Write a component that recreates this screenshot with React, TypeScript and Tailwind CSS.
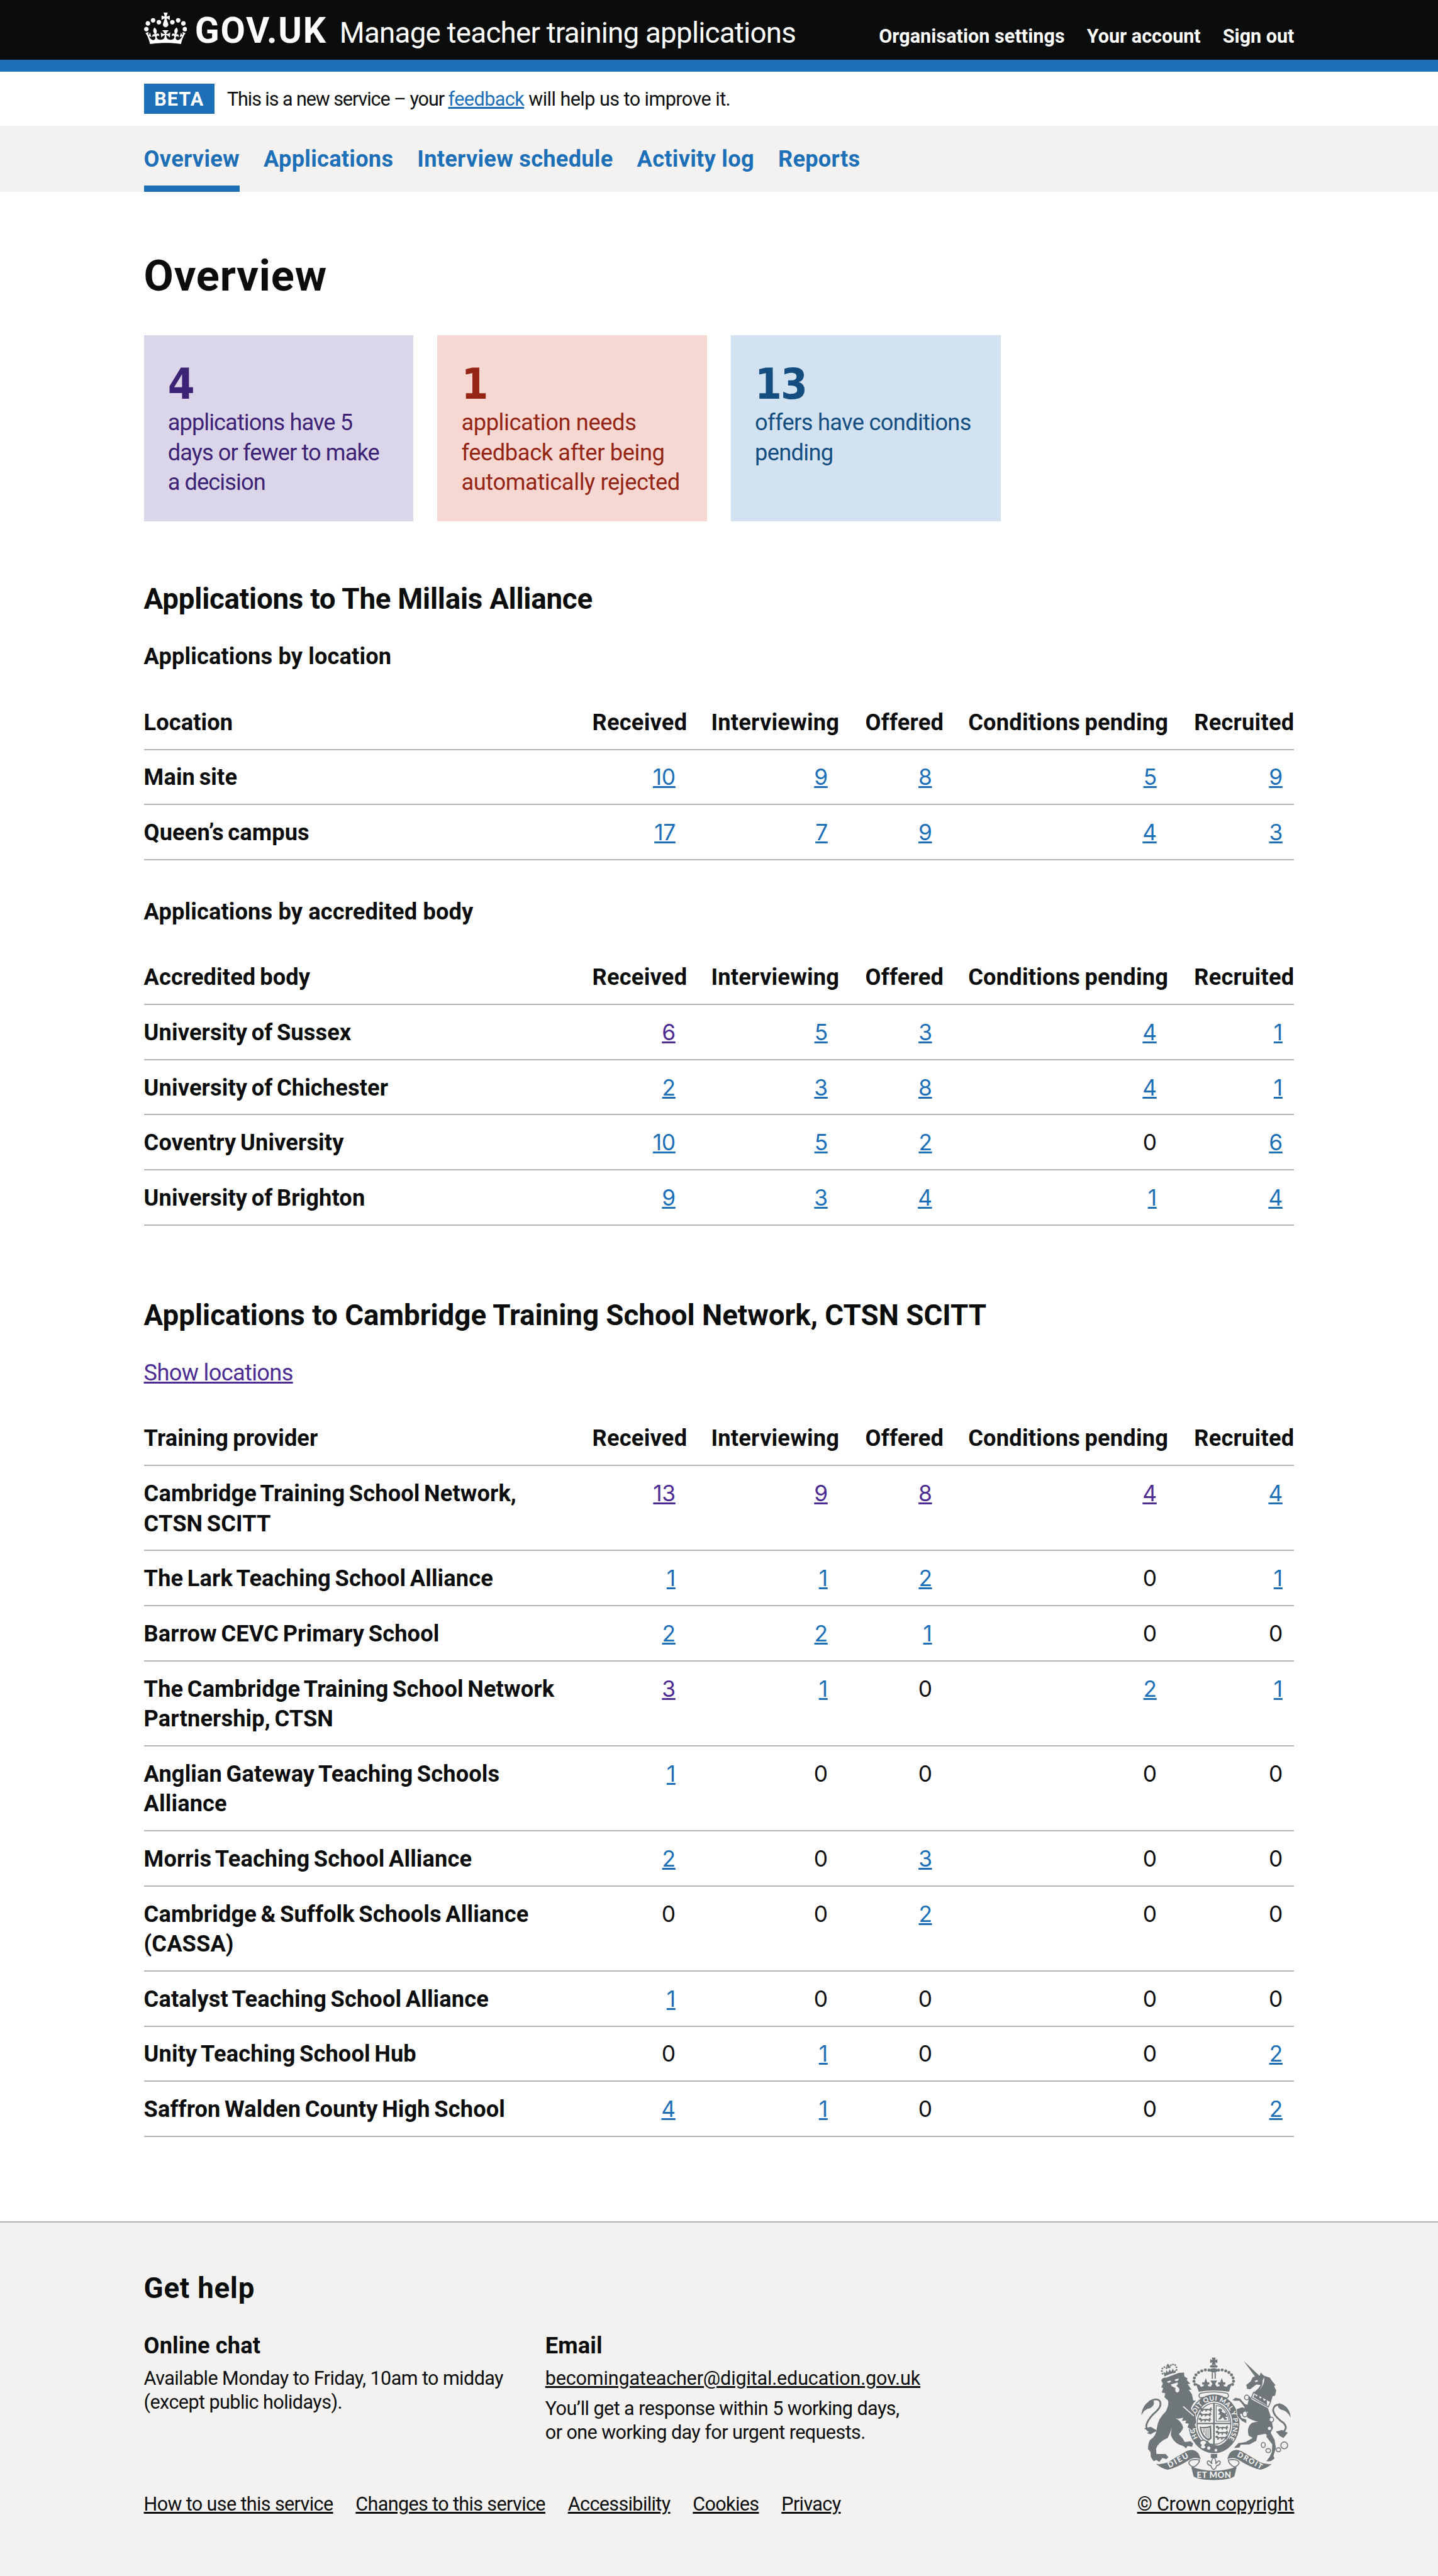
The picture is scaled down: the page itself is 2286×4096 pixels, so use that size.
import type { ReactNode } from "react";

type Cell = number | string;
type RowData = { name: string; cells: Cell[] };

// A leading "v" marks a visited link, a bare number is an unvisited link, and 0 is plain text.
const byLocation: RowData[] = [
  { name: "Main site", cells: [10, 9, 8, 5, 9] },
  { name: "Queen’s campus", cells: [17, 7, 9, 4, 3] },
];

const byAccreditedBody: RowData[] = [
  { name: "University of Sussex", cells: ["v6", 5, 3, 4, 1] },
  { name: "University of Chichester", cells: [2, 3, 8, 4, 1] },
  { name: "Coventry University", cells: [10, 5, 2, 0, 6] },
  { name: "University of Brighton", cells: [9, 3, 4, 1, 4] },
];

const byProvider: RowData[] = [
  { name: "Cambridge Training School Network, CTSN SCITT", cells: ["v13", "v9", "v8", "v4", 4] },
  { name: "The Lark Teaching School Alliance", cells: [1, 1, 2, 0, 1] },
  { name: "Barrow CEVC Primary School", cells: [2, 2, 1, 0, 0] },
  { name: "The Cambridge Training School Network Partnership, CTSN", cells: ["v3", 1, 0, 2, 1] },
  { name: "Anglian Gateway Teaching Schools Alliance", cells: [1, 0, 0, 0, 0] },
  { name: "Morris Teaching School Alliance", cells: [2, 0, 3, 0, 0] },
  { name: "Cambridge & Suffolk Schools Alliance (CASSA)", cells: [0, 0, 2, 0, 0] },
  { name: "Catalyst Teaching School Alliance", cells: [1, 0, 0, 0, 0] },
  { name: "Unity Teaching School Hub", cells: [0, 1, 0, 0, 2] },
  { name: "Saffron Walden County High School", cells: [4, 1, 0, 0, 2] },
];

const columns = ["Received", "Interviewing", "Offered", "Conditions pending", "Recruited"];

const underline = "underline decoration-[3px] underline-offset-[2px]";

function Container({ children, className = "" }: { children: ReactNode; className?: string }) {
  return <div className={`mx-auto w-[1828.8px] ${className}`}>{children}</div>;
}

function CrownLogo() {
  return (
    <svg viewBox="0 0 132 97" preserveAspectRatio="none" className="mt-[0.5px] h-[50.5px] w-[68.6px] shrink-0 self-start" fill="#fff" aria-hidden="true">
      <path d="M25 30.2c3.5 1.5 7.7-.2 9.1-3.7 1.5-3.6-.2-7.8-3.9-9.2-3.6-1.4-7.6.3-9.1 3.9-1.4 3.5.3 7.5 3.9 9zM9 39.5c3.6 1.5 7.8-.2 9.2-3.7 1.5-3.6-.2-7.8-3.9-9.1-3.6-1.5-7.6.2-9.1 3.8-1.4 3.5.3 7.5 3.8 9zM4.4 57.2c3.5 1.5 7.7-.2 9.1-3.8 1.5-3.6-.2-7.7-3.9-9.1-3.5-1.5-7.6.3-9.1 3.8-1.4 3.5.3 7.6 3.9 9.1zm38.3-21.4c3.5 1.5 7.7-.2 9.1-3.8 1.5-3.6-.2-7.7-3.9-9.1-3.6-1.5-7.6.3-9.1 3.8-1.3 3.6.4 7.7 3.9 9.1zm64.4-5.6c-3.6 1.5-7.8-.2-9.1-3.7-1.5-3.6.2-7.8 3.8-9.2 3.6-1.4 7.7.3 9.2 3.9 1.3 3.5-.4 7.5-3.9 9zm15.9 9.3c-3.6 1.5-7.7-.2-9.1-3.7-1.5-3.6.2-7.8 3.7-9.1 3.6-1.5 7.7.2 9.2 3.8 1.5 3.5-.3 7.5-3.8 9zm4.7 17.7c-3.6 1.5-7.8-.2-9.2-3.8-1.5-3.6.2-7.7 3.9-9.1 3.6-1.5 7.7.3 9.2 3.8 1.3 3.5-.4 7.6-3.9 9.1zM89.3 35.8c-3.6 1.5-7.8-.2-9.2-3.8-1.4-3.6.2-7.7 3.9-9.1 3.6-1.5 7.7.3 9.2 3.8 1.4 3.6-.3 7.7-3.9 9.1zM69.7 17.7l8.9 4.7V9.3l-8.9 2.8c-.2-.3-.5-.6-.9-.9L72.4 0H59.6l3.5 11.2c-.3.3-.6.5-.9.9l-8.8-2.8v13.1l8.8-4.7c.3.3.6.7.9.9l-5 15.4v.1c-.2.8-.4 1.6-.4 2.4 0 4.1 3.1 7.5 7 8.1h.2c.3 0 .7.1 1 .1.4 0 .7 0 1-.1h.2c4-.6 7.1-4.1 7.1-8.1 0-.8-.1-1.7-.4-2.4V34l-5.1-15.4c.4-.2.7-.6 1-.9zM66 92.8c16.9 0 32.8 1.1 47.1 3.2 4-16.9 8.9-26.7 14-33.5l-9.6-3.4c1 4.9 1.1 7.2 0 10.2-1.5-1.4-3-4.3-4.2-8.7L108.6 76c2.8-2 5-3.2 7.5-3.3-4.4 9.4-10 11.9-13.6 11.2-4.3-.8-6.3-4.6-5.6-7.9 1-4.7 5.7-5.9 8-.5 4.3-8.7-3-11.4-7.6-8.8 7.1-7.2 7.9-13.5 2.1-21.1-8 6.1-8.1 12.3-4.5 20.8-4.7-5.4-12.1-2.5-9.5 6.2 3.4-5.2 7.9-2 7.2 3.1-.6 4.3-6.4 7.8-13.5 7.2-10.3-.9-10.9-8-11.2-13.8 2.5-.5 7.1 1.8 11 7.3L80.2 60c-4.1 4.4-8 5.3-12.3 5.4 1.4-4.4 8-11.6 8-11.6H55.5s6.4 7.2 7.9 11.6c-4.2-.1-8-1-12.3-5.4l1.4 16.4c3.9-5.5 8.5-7.7 10.9-7.3-.3 5.8-.9 12.8-11.1 13.8-7.2.6-12.9-2.9-13.5-7.2-.7-5 3.8-8.3 7.1-3.1 2.7-8.7-4.6-11.6-9.4-6.2 3.7-8.5 3.6-14.7-4.6-20.8-5.8 7.6-5 13.9 2.2 21.1-4.7-2.6-11.9.1-7.7 8.8 2.3-5.5 7.1-4.2 8.1.5.7 3.3-1.3 7.1-5.7 7.9-3.5.7-9-1.8-13.5-11.2 2.5.1 4.7 1.3 7.5 3.3l-4.7-15.4c-1.2 4.4-2.7 7.2-4.3 8.7-1.1-3-.9-5.3 0-10.2l-9.5 3.4c5 6.9 9.9 16.7 14 33.5 14.8-2.1 30.8-3.2 47.7-3.2z" />
    </svg>
  );
}

const crownDots: [number, number][] = [
  [413, 110], [395, 109], [377, 114], [361, 122], [348, 134], [340, 149], [338, 166], [343, 182],
];

const lionCrownDots: [number, number][] = [
  [181, 128], [177, 115], [180, 102], [190, 95], [200, 100], [216, 96], [222, 86], [233, 82], [244, 85], [250, 96], [251, 109],
];

function Leopard({ x, y }: { x: number; y: number }) {
  return (
    <path
      transform={`translate(${x} ${y})`}
      d="M0 6 L6 1 L13 3 L17 9 L40 7 L50 9 L56 2 L62 0 L60 8 L66 12 L58 15 L60 22 L53 21 L50 15 L38 15 L36 22 L29 21 L31 14 L20 15 L16 22 L9 21 L12 14 L4 13 Z"
    />
  );
}

function RoyalArms() {
  const ink = "#6f777b";
  const paper = "#f3f2f1";
  return (
    <svg viewBox="70 45 755 618" className="h-[196.2px] w-[239.7px]" fill={ink} aria-hidden="true">
      {/* St Edward's crown */}
      <path d="M427 47h20l-4 13 12-5v20l-12-5 5 14h-22l5-14-12 5V55l12 5z" />
      <rect x="418" y="86" width="38" height="11" rx="5" />
      <ellipse cx="437" cy="111" rx="20" ry="11" />
      <path d="M427 122h6v32h-6zM441 122h6v32h-6z" />
      {crownDots.map(([x, y]) => (
        <g key={`${x}-${y}`}>
          <circle cx={x} cy={y} r="7.5" />
          <circle cx={874 - x} cy={y} r="7.5" />
        </g>
      ))}
      <path d="M347 176 L366 184 L372 194 L386 190 L388 182 L378 182 L380 170 L390 172 L397 150 L405 172 L414 170 L416 182 L407 182 L409 190 L421 193 L430 180 L420 162 H454 L444 180 L453 193 L466 190 L467 182 L458 182 L460 170 L469 172 L477 150 L485 172 L494 170 L496 182 L486 182 L488 190 L502 194 L508 184 L528 176 L513 218 Q437 206 362 218 Z" />
      <path d="M370 226 Q437 212 504 226 Q518 238 504 250 Q437 232 370 250 Q356 238 370 226Z" fill={paper} stroke={ink} strokeWidth="5" />

      {/* Garter */}
      <ellipse cx="438" cy="379" rx="128" ry="147" />
      <ellipse cx="438" cy="379" rx="93" ry="112" fill={paper} />
      <ellipse cx="438" cy="379" rx="87" ry="106" />
      <ellipse cx="438" cy="379" rx="82" ry="101" fill={paper} />
      <path id="garter-line" d="M358 449 A98 117 0 1 1 500 469" fill="none" />
      <text fill={paper} fontFamily="Lato, sans-serif" fontWeight="900" fontSize="33">
        <textPath href="#garter-line" textLength="490" lengthAdjust="spacing">HONI SOIT QUI MAL Y PENSE</textPath>
      </text>
      {/* Quartered shield */}
      <rect x="434" y="276" width="8" height="206" />
      <rect x="354" y="374" width="168" height="7" />
      <Leopard x={365} y={296} />
      <Leopard x={362} y={321} />
      <Leopard x={360} y={347} />
      <Leopard x={446} y={387} />
      <Leopard x={446} y={412} />
      <Leopard x={444} y={437} />
      <path d="M449 287 L470 291 Q508 316 515 366 L449 366 Z" fill="none" stroke={ink} strokeWidth="4" />
      <path d="M458 310 L466 302 L480 308 L476 318 L490 326 L500 322 L498 334 L508 344 L492 344 L506 356 L492 360 L482 346 L470 358 L458 358 L468 344 L472 334 L458 332 L468 322Z" />
      <path d="M366 392 Q396 400 424 387 L426 452 L412 464 Q372 446 366 392Z M374 400 Q380 436 410 454 L417 448 L416 398 Q394 406 374 400Z" fillRule="evenodd" />
      <path d="M383 404 L388 424 M392 405 L396 437 M401 404 L403 445 M409 402 L410 450" stroke={ink} strokeWidth="3" />
      {/* Buckle */}
      <path d="M380 478 L406 462 L420 482 L470 490 L498 488 L484 514 L430 524 L384 506Z" />
      <circle cx="412" cy="500" r="8" fill={paper} />
      <circle cx="448" cy="511" r="7" fill={paper} />
      <path d="M370 466 Q392 452 404 474 L392 486 Q408 500 384 506 Q362 500 374 486 Q362 478 370 466Z" fill={paper} stroke={ink} strokeWidth="6" />
      {/* Badge hanging from the garter */}
      <path d="M422 530h32v20h-32z" />
      <path d="M437 546 Q452 562 446 580 Q466 554 470 572 Q468 586 452 588 L446 602 L437 609 L428 602 L422 588 Q406 586 404 572 Q408 554 428 580 Q422 562 437 546Z" fill={paper} stroke={ink} strokeWidth="5" />

      {/* Lion */}
      {lionCrownDots.map(([x, y]) => (
        <circle key={`${x}-${y}`} cx={x} cy={y} r="4.5" />
      ))}
      <path d="M203 80 h9 v7 h5 v6 h-5 v8 h-7 v-8 h-6 v-6 h5z" />
      <path d="M190 142 L186 118 L196 126 L200 110 L209 122 L216 106 L224 118 L232 102 L238 116 L248 108 L246 124 Q216 128 190 142 Z" />
      <path
        stroke={paper}
        strokeWidth="6"
        paintOrder="stroke"
        d="M174 160 Q184 146 198 148 L262 124 L288 122 L290 142 L306 152 L302 160 L320 178 L306 180 L326 208 L312 208 L328 232 L334 262 L348 262 Q330 278 322 304 L344 330 L350 372 L342 384 L350 400 L334 402 L330 414 L318 404 L306 396 L312 378 L294 376 L300 362 L278 364 L284 348 L258 354 L244 350 Q276 366 284 398 Q276 420 262 430 Q282 450 292 470 L322 466 L334 478 L328 494 L306 490 L298 502 L284 490 Q240 480 222 436 L226 396 Q222 420 206 450 Q160 470 148 504 L150 530 L196 530 L210 546 L200 556 L180 550 L164 570 L150 560 L136 566 L122 546 L120 520 L108 506 Q108 476 118 460 Q150 440 152 400 Q158 352 196 318 Q214 286 208 262 L190 246 L194 226 L176 222 L184 200 L174 196 L182 178 Z"
      />
      <path d="M202 168 l18 -6 4 6 -14 6z M242 158 l20 -7 -4 12 -14 2z M222 182 l34 -10 2 8 -8 8 14 14 Q268 220 254 222 Q240 218 246 200 L226 190z" fill={paper} />
      <path d="M284 292 Q312 318 338 340" fill="none" stroke={paper} strokeWidth="5" />
      <path d="M148 414 Q88 426 102 376 Q116 344 150 316 Q182 284 164 262 Q146 248 112 270" fill="none" stroke={ink} strokeWidth="9" />
      <path d="M74 338 Q80 276 132 258 Q148 282 120 300 Q88 304 74 338Z M88 402 L122 394 L152 412 L122 432 L102 426 L114 418Z" />

      {/* Unicorn */}
      <path d="M586 63 L664 136 L648 148 Z" />
      <path d="M650 140 L668 136 L672 122 L688 138 L718 148 L730 166 L746 184 L740 192 L750 212 L744 238 L732 240 L724 268 L690 250 L636 222 Q660 206 672 184 L650 182 L632 196 L620 206 L604 204 L600 184 L622 166 L632 146Z" />
      <path d="M642 164 l12 -4 6 6 -14 4z M690 146 Q694 182 660 216 Q684 190 682 160z" fill={paper} />
      <path
        stroke={paper}
        strokeWidth="6"
        paintOrder="stroke"
        d="M616 238 L626 256 L708 300 L722 340 L734 400 L722 424 L742 460 L748 500 L736 540 L742 552 L722 566 L700 566 L716 546 L728 520 L730 482 L690 430 L656 436 L650 464 L616 482 L572 484 L566 498 L538 500 L560 476 L596 470 L632 450 L612 438 Q600 396 628 374 Q656 366 668 372 Q622 360 604 346 L608 320 L594 312 L584 330 L568 328 L576 350 L600 358 L600 376 L578 364 L556 342 L552 306 L578 296 L594 300 L580 280 L564 262 L546 264 L530 260 L546 248 L570 254 L592 280 L606 284Z"
      />
      <path d="M636 222 L722 268 L710 294 L626 248Z" fill={paper} stroke={ink} strokeWidth="5" />
      <path d="M636 246 L642 230 L650 242 L662 234 L668 252 L682 246 L688 264 L702 258 L704 286Z" />
      <g fill={paper}>
        <circle cx="716" cy="402" r="8" />
        <circle cx="694" cy="437" r="8" />
      </g>
      <g fill={paper} stroke={ink} strokeWidth="5">
        <ellipse cx="602" cy="247" rx="11" ry="12" />
        <ellipse cx="593" cy="330" rx="12" ry="14" />
        <ellipse cx="726" cy="358" rx="11" ry="12" />
        <ellipse cx="685" cy="485" rx="10" ry="13" />
        <ellipse cx="710" cy="513" rx="12" ry="10" />
        <ellipse cx="761" cy="509" rx="11" ry="10" />
        <circle cx="790" cy="487" r="17" />
      </g>
      <path d="M780 424 Q812 400 786 374 Q738 342 734 310 Q738 282 766 282" fill="none" stroke={ink} strokeWidth="9" />
      <path d="M822 348 Q818 290 764 276 Q748 292 774 308 Q806 312 822 348Z M748 418 L778 410 L808 424 L786 450 L768 440Z" />

      {/* Scrolls */}
      <path d="M148 580 Q176 584 206 572 L300 516 Q340 498 362 530 L372 556 Q344 544 320 556 Q252 600 206 609 Q176 604 148 580Z" />
      <path d="M728 580 Q700 584 670 572 L576 516 Q536 498 514 530 L504 556 Q532 544 556 556 Q624 600 670 609 Q700 604 728 580Z" />
      <path d="M366 560 Q314 552 312 576 Q318 592 340 596 M366 558 Q366 582 332 598 M510 560 Q562 552 564 576 Q558 592 536 596 M510 558 Q510 582 544 598" fill="none" stroke={ink} strokeWidth="5" />
      <path d="M324 594 Q437 634 552 594 L540 642 Q520 660 437 661 Q356 660 336 642Z" />
      <g fill={paper} fontFamily="Lato, sans-serif" fontWeight="900" fontSize="42">
        <text transform="translate(214 600) rotate(-28)" textLength="112" fontSize="39">DIEU</text>
        <text transform="translate(552 540) rotate(29)" textLength="138" fontSize="37">DROIT</text>
        <text x="352" y="650" textLength="172">ET MON</text>
      </g>
    </svg>
  );
}

function StatCard({ value, tone, tracking, children }: { value: string; tone: string; tracking: string; children: ReactNode }) {
  return (
    <div className={`h-[295.3px] w-[428.6px] p-[38.1px] ${tone}`}>
      <div className="h-[76.2px] pt-[1px] font-['DejaVu_Sans_Condensed','DejaVu_Sans',sans-serif] text-[68.5px] font-bold leading-[76.2px] tracking-[-0.03em] [font-stretch:condensed]">
        {value}
      </div>
      <div className={`pt-[0.5px] text-[36.2px] leading-[47.625px] ${tracking}`}>{children}</div>
    </div>
  );
}

function Count({ value }: { value: Cell }) {
  const num = "font-['Inter',sans-serif] text-[35.3px] tracking-[-0.01em]";
  if (value === 0) return <span className={num}>0</span>;
  const visited = typeof value === "string";
  return (
    <a className={`${num} ${underline} ${visited ? "text-[#4c2c92]" : "text-[#1d70b8]"}`}>
      {visited ? value.slice(1) : value}
    </a>
  );
}

const rowGrid =
  "grid grid-cols-[677.2px_186.5px_242px_165.8px_357.2px_200.1px] border-b-2 border-[#b1b4b6] pt-[19.9px] pb-[18.1px] text-[36.2px] leading-[47.625px]";

function DataTable({ heading, rows }: { heading: string; rows: RowData[] }) {
  return (
    <div role="table">
      <div role="row" className={`${rowGrid} font-bold`}>
        <div className="tracking-[0.003em] [word-spacing:-2px]">{heading}</div>
        {columns.map((c) => (
          <div key={c} className="justify-self-end whitespace-nowrap tracking-[0.007em] [word-spacing:-2px]">{c}</div>
        ))}
      </div>
      {rows.map((r) => (
        <div role="row" key={r.name} className={rowGrid}>
          <div className="font-bold tracking-[0.0035em] [word-spacing:-2.5px]">{r.name}</div>
          {r.cells.map((c, i) => (
            <div key={i} className="h-[47.625px] pr-[18.5px] text-right">
              <Count value={c} />
            </div>
          ))}
        </div>
      ))}
    </div>
  );
}

function SectionTitle({ children, tracking }: { children: ReactNode; tracking: string }) {
  return <h2 className={`text-[45.7px] font-bold leading-[57.15px] ${tracking}`}>{children}</h2>;
}

function SubTitle({ children }: { children: ReactNode }) {
  return <h3 className="text-[36.2px] font-bold leading-[47.625px] tracking-[0.004em]">{children}</h3>;
}

export default function App() {
  return (
    <div className="h-[4096px] w-[2286px] overflow-hidden bg-white font-['Roboto',sans-serif] text-[#0b0c0c]">
      <header className="h-[114.3px] border-b-[19px] border-[#1d70b8] bg-[#0b0c0c] text-white">
        <Container className="flex items-baseline pt-[19.5px]">
          <CrownLogo />
          <span className="ml-[12.5px] text-[57.15px] font-bold leading-none tracking-[0.031em]">GOV.UK</span>
          <span className="ml-[20px] text-[45.7px] leading-none tracking-[-0.0165em]">Manage teacher training applications</span>
          <nav className="ml-auto flex gap-[35.2px] text-[30.5px] font-bold leading-none">
            <a className="tracking-[0.002em]">Organisation settings</a>
            <a>Your account</a>
            <a>Sign out</a>
          </nav>
        </Container>
      </header>

      <Container className="flex h-[85.7px] items-center">
        <strong className="h-[47.6px] w-[112.4px] bg-[#1d70b8] pt-[0.5px] text-center text-[30.5px] leading-[47.6px] tracking-[0.036em] text-white">BETA</strong>
        <span className="ml-[20px] pt-[1px] text-[30.5px] leading-[38.1px] tracking-[-0.017em]">
          <span className="tracking-[-0.035em]">This is a new service – your </span>
          <a className={`${underline} text-[#1d70b8]`}>feedback</a> will help us to improve it.
        </span>
      </Container>

      <div className="h-[104.8px] bg-[#f3f2f1]">
        <Container className="flex gap-[38.1px] text-[36.2px] font-bold leading-[47.6px] tracking-[0.0075em] text-[#1d70b8]">
          <a className="h-[104.8px] border-b-[10px] border-[#1d70b8] pt-[28.6px]">Overview</a>
          <a className="pt-[28.6px]">Applications</a>
          <a className="pt-[28.6px]">Interview schedule</a>
          <a className="pt-[28.6px]">Activity log</a>
          <a className="pt-[28.6px]">Reports</a>
        </Container>
      </div>

      <Container className="flex h-[3227px] flex-col">
        <h1 className="mt-[98.1px] text-[68.6px] font-bold leading-[71.4px] tracking-[0.012em]">Overview</h1>
        <div className="mt-[59.1px] flex gap-[38.1px]">
          <StatCard value="4" tone="bg-[#dbd5e9] text-[#3d2375]" tracking="tracking-[-0.025em]">
            applications have 5 days or fewer to make a decision
          </StatCard>
          <StatCard value="1" tone="bg-[#f6d7d2] text-[#942514]" tracking="tracking-[-0.01em]">
            application needs feedback after being automatically rejected
          </StatCard>
          <StatCard value="13" tone="bg-[#d2e2f1] text-[#144e81]" tracking="tracking-[-0.018em]">
            offers have conditions pending
          </StatCard>
        </div>

        <section className="mt-[95.25px]">
          <SectionTitle tracking="tracking-[-0.005em]">Applications to The Millais Alliance</SectionTitle>
          <div className="mt-[39px] mb-[37.2px]"><SubTitle>Applications by location</SubTitle></div>
          <DataTable heading="Location" rows={byLocation} />
          <div className="mt-[58px] mb-[37.2px]"><SubTitle>Applications by accredited body</SubTitle></div>
          <DataTable heading="Accredited body" rows={byAccreditedBody} />
        </section>

        <section className="mt-[114px]">
          <SectionTitle tracking="tracking-[0em]">Applications to Cambridge Training School Network, CTSN SCITT</SectionTitle>
          <p className="mt-[39px] mb-[37.2px] text-[36.2px] leading-[47.625px] tracking-[-0.018em]">
            <a className={`${underline} text-[#4c2c92]`}>Show locations</a>
          </p>
          <DataTable heading="Training provider" rows={byProvider} />
        </section>
      </Container>

      <footer className="h-[564.2px] border-t-2 border-[#b1b4b6] bg-[#f3f2f1] pt-[76.2px]">
        <Container className="flex h-[488px] justify-between">
          <div className="flex flex-col">
            <SectionTitle tracking="tracking-[0.016em]">Get help</SectionTitle>
            <div className="mt-[39px] flex h-[257.3px] text-[30.5px] leading-[38.1px] tracking-[-0.018em]">
              <div className="w-[638.2px]">
                <SubTitle>Online chat</SubTitle>
                <p className="mt-[9.5px]">Available Monday to Friday, 10am to midday<br />(except public holidays).</p>
              </div>
              <div>
                <SubTitle>Email</SubTitle>
                <p className="mt-[9.5px] tracking-[-0.0048em]"><a className={underline}>becomingateacher@digital.education.gov.uk</a></p>
                <p className="mt-[9.5px]">You’ll get a response within 5 working days,<br />or one working day for urgent requests.</p>
              </div>
            </div>
            <div className="flex gap-[35.8px] text-[30.5px] leading-[38.1px] tracking-[-0.02em]">
              <a className={underline}>How to use this service</a>
              <a className={underline}>Changes to this service</a>
              <a className={underline}>Accessibility</a>
              <a className={underline}>Cookies</a>
              <a className={underline}>Privacy</a>
            </div>
          </div>
          <div className="flex flex-col items-end pt-[138.5px]">
            <div className="mr-[4.8px]"><RoyalArms /></div>
            <a className={`${underline} mt-[18.8px] text-[30.5px] leading-[38.1px] tracking-[-0.0055em]`}>© Crown copyright</a>
          </div>
        </Container>
      </footer>
    </div>
  );
}
